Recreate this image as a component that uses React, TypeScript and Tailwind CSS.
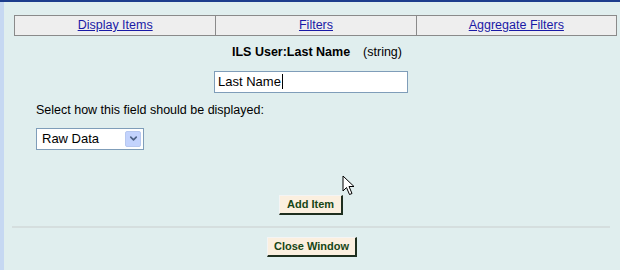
import { ChevronDown } from "lucide-react";

const tabs = ["Display Items", "Filters", "Aggregate Filters"];

const Btn = ({ label, pad }: { label: string; pad: string }) => (
  <button
    type="button"
    className={`h-[20px] border border-t-[#f4f4f4] border-l-[#f4f4f4] border-b-[#1e2e1e] border-r-[#1e2e1e] border-b-2 border-r-2 bg-[#fbefdf] ${pad} text-[11px] font-bold leading-none text-[#164616] [font-family:'Liberation_Sans',Arial,sans-serif]`}
  >
    {label}
  </button>
);

export default function App() {
  return (
    <div className="relative flex h-[270px] w-[620px] border-t-2 border-[#1c3d8c] bg-[#e0eeee] text-[12.5px] text-black [font-family:'Liberation_Sans',Arial,sans-serif]">
      <div className="w-[4px] bg-[#c6d8f2]" />
      <div className="flex flex-1 flex-col">
        <div className="ml-[10px] mr-[3px] mt-[13px] grid grid-cols-3 border border-[#8a8a8a] bg-[#eeeeee]">
          {tabs.map((t, i) => (
            <div
              key={t}
              className={`flex h-[19px] items-center justify-center ${i > 0 ? "border-l border-[#8a8a8a]" : ""}`}
            >
              <a href="#" className="text-[#1a1aa6] underline">
                {t}
              </a>
            </div>
          ))}
        </div>

        <div className="mt-[7px] flex justify-center pl-[10px]">
          <span className="font-bold">ILS User:Last Name</span>
          <span className="ml-[13px]">(string)</span>
        </div>

        <div className="mt-[9px] flex pl-[210px]">
          <div className="flex h-[22px] w-[194px] items-center border border-[#7f9db9] bg-white px-[3px] text-[13px]">
            Last Name<span className="ml-px h-[15px] w-px bg-black" />
          </div>
        </div>

        <div className="mt-[8px] pl-[32px]">Select how this field should be displayed:</div>

        <div className="mt-[8px] pl-[32px]">
          <div className="flex h-[22px] w-[108px] items-center justify-between border border-[#7f9db9] bg-white pl-[5px] pr-[2px] text-[13px]">
            <span>Raw Data</span>
            <span className="flex h-[16px] w-[16px] items-center justify-center rounded-[2px] border border-[#b7c8f0] bg-[#c3d3fd]">
              <ChevronDown className="h-[11px] w-[11px] text-[#4d6185]" strokeWidth={3.5} />
            </span>
          </div>
        </div>

        <div className="mt-[45px] flex justify-center pr-[2px]">
          <Btn label="Add Item" pad="px-[7px]" />
        </div>

        <div className="mt-[11px] ml-[8px] mr-[10px] h-[2px] bg-[#d5dede]" />

        <div className="mt-[9px] flex justify-center">
          <Btn label="Close Window" pad="px-[6px]" />
        </div>
      </div>

      <svg className="absolute left-[342px] top-[173px]" width="14" height="22" viewBox="0 0 14 22">
        <path d="M1 1 L1 16 L4.5 12.5 L7.5 19.5 L10 18.5 L7 11.5 L12 11.5 Z" fill="#fff" stroke="#000" strokeWidth="1" />
      </svg>
    </div>
  );
}
